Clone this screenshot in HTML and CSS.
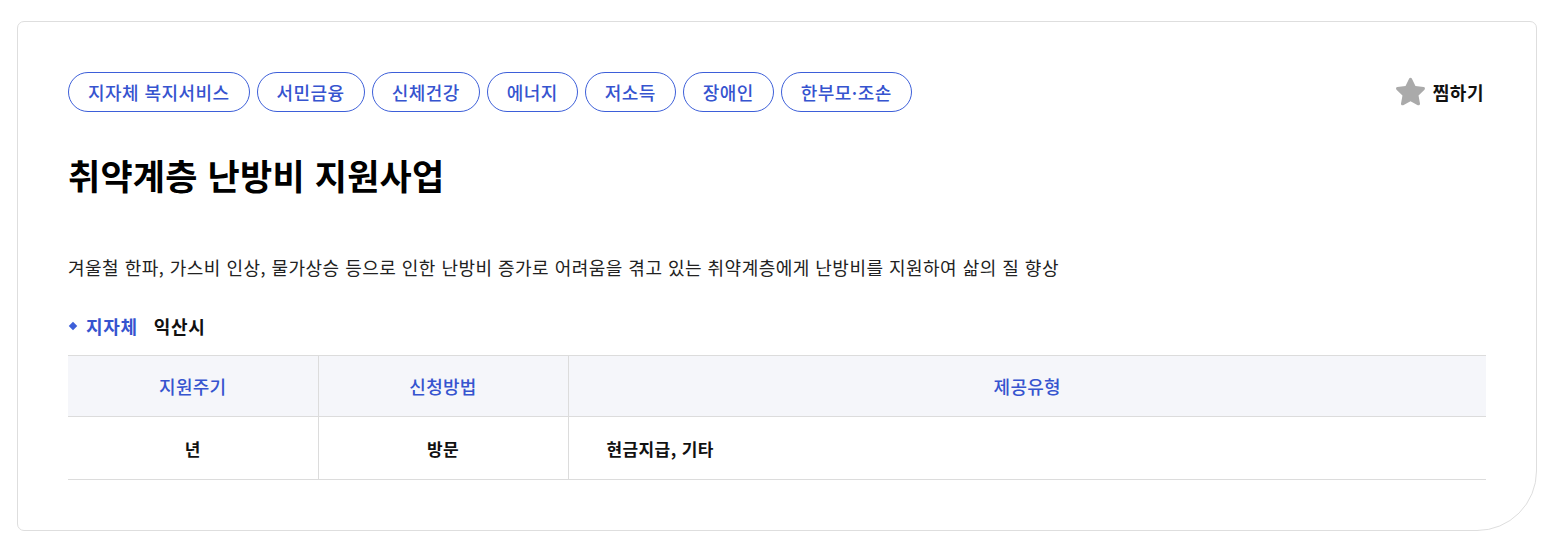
FILE: index.html
```html
<!DOCTYPE html>
<html lang="ko">
<head>
<meta charset="utf-8">
<link rel="stylesheet" href="styles.css">
</head>
<body>
<div class="card">
  <div class="top">
    <ul class="tags">
      <li class="tag">지자체 복지서비스</li>
      <li class="tag">서민금융</li>
      <li class="tag">신체건강</li>
      <li class="tag">에너지</li>
      <li class="tag">저소득</li>
      <li class="tag">장애인</li>
      <li class="tag">한부모·조손</li>
    </ul>
    <button class="fav">
      <svg class="star" width="35" height="35" viewBox="0 0 24 24"><path d="M12 1.8c.4 0 .7.2.9.6l2.5 5.2 5.6.7c.9.1 1.2 1.2.6 1.8l-4.1 3.9 1 5.6c.2.9-.8 1.5-1.5 1.1L12 18l-5 2.7c-.8.4-1.7-.2-1.5-1.1l1-5.6-4.1-3.9c-.6-.6-.3-1.7.6-1.8l5.6-.7 2.5-5.2c.2-.4.5-.6.9-.6z" fill="#aaaaaa"/></svg>
      <span>찜하기</span>
    </button>
  </div>
  <h1 class="title">취약계층 난방비 지원사업</h1>
  <p class="desc">겨울철 한파, 가스비 인상, 물가상승 등으로 인한 난방비 증가로 어려움을 겪고 있는 취약계층에게 난방비를 지원하여 삶의 질 향상</p>
  <div class="org"><span class="dot"></span><span class="org-label">지자체</span><span class="org-name">익산시</span></div>
  <table class="info">
    <thead>
      <tr><th class="c1">지원주기</th><th class="c2">신청방법</th><th>제공유형</th></tr>
    </thead>
    <tbody>
      <tr><td class="center">년</td><td class="center">방문</td><td class="left">현금지급, 기타</td></tr>
    </tbody>
  </table>
</div>
</body>
</html>
```
FILE: styles.css
```css
* { box-sizing: border-box; }
html, body { margin: 0; padding: 0; background: #fff; }
body {
  font-family: "Noto Sans CJK KR", "Noto Sans", sans-serif;
  color: #111;
  padding: 21px 25px 0 17px;
}
.card {
  width: 1520px;
  height: 510px;
  border: 1px solid #dedede;
  border-radius: 7px 7px 60px 7px;
  padding: 50px 50px 0 50px;
}
.top {
  display: flex;
  align-items: center;
  justify-content: space-between;
}
.tags {
  display: flex;
  gap: 7px;
  list-style: none;
  margin: 0;
  padding: 0;
}
.tag {
  height: 40px;
  line-height: 38px;
  padding: 0 19px;
  border: 1px solid #3d5fd9;
  border-radius: 20px;
  color: #3654cf;
  font-size: 18px;
  font-weight: 500;
  letter-spacing: 0.45px;
}
.fav {
  display: flex;
  align-items: center;
  gap: 5px;
  background: none;
  border: 0;
  padding: 0;
  margin-right: 2px;
  font-family: inherit;
  font-size: 18px;
  font-weight: 700;
  letter-spacing: 0.5px;
  color: #111;
}
.title {
  margin: 37px 0 0;
  font-size: 35px;
  line-height: 52px;
  font-weight: 700;
  letter-spacing: 0.2px;
  color: #000;
}
.desc {
  margin: 53px 0 0;
  font-size: 18px;
  line-height: 26px;
  color: #222;
  letter-spacing: 0.48px;
}
.org {
  display: flex;
  align-items: center;
  margin-top: 33px;
  font-size: 18px;
  font-weight: 700;
  line-height: 26px;
  letter-spacing: 0.7px;
}
.dot {
  width: 6px;
  height: 6px;
  background: #3d5fd9;
  transform: rotate(45deg);
  margin: 0 10px 0 2px;
}
.org-label { color: #3654cf; margin-right: 16px; }
.org-name { color: #111; }
.info {
  width: 100%;
  margin-top: 16px;
  border-collapse: collapse;
}
.info th, .info td {
  border-top: 1px solid #dcdcdc;
  border-bottom: 1px solid #dcdcdc;
}
.info th + th, .info td + td { border-left: 1px solid #dcdcdc; }
.info th {
  height: 61px;
  background: #f5f6fa;
  color: #3654cf;
  font-size: 18px;
  font-weight: 500;
  letter-spacing: 0.3px;
}
.info td {
  height: 63px;
  font-size: 17px;
  font-weight: 700;
  letter-spacing: 0.4px;
  color: #111;
}
.c1, .c2 { width: 250px; }
.center { text-align: center; }
.left { text-align: left; padding-left: 38px; }
```
